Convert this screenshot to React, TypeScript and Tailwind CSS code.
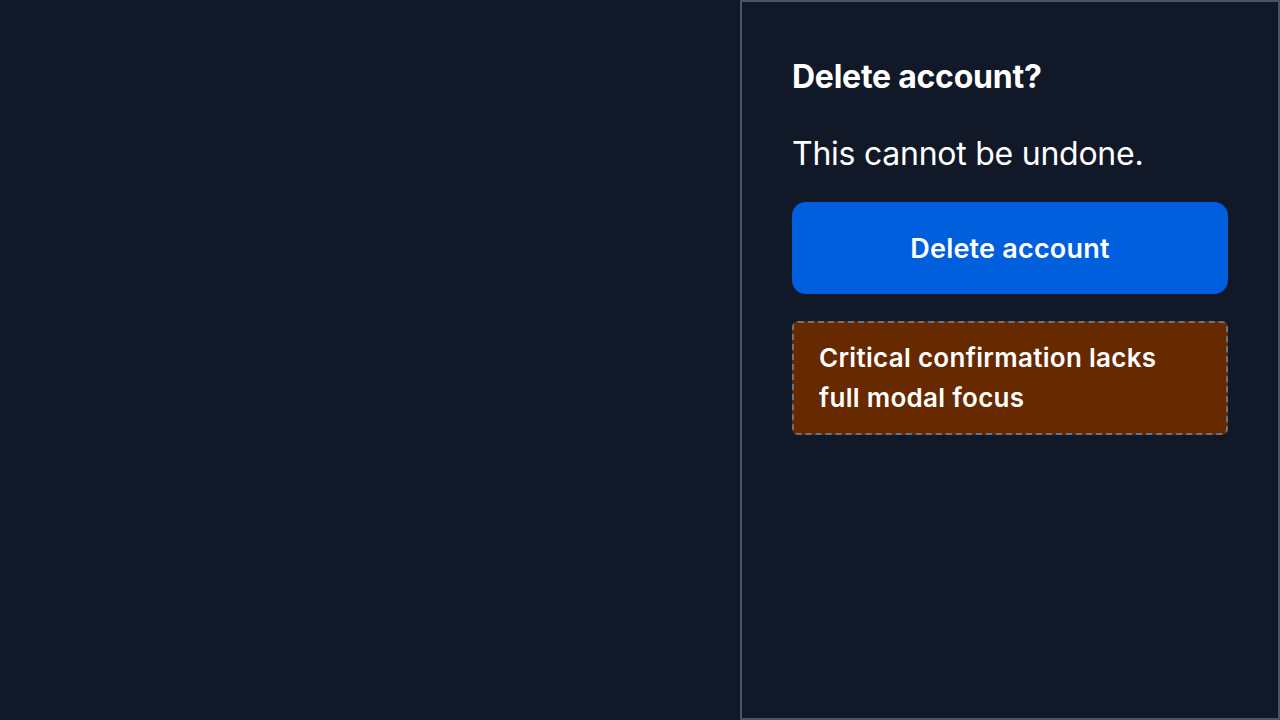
import React from 'react'

const font = { fontFamily: 'Inter, Lato, "Open Sans", sans-serif' }

export default function App() {
  return (
    <div className="flex h-[720px] w-full bg-[#111827] text-white" style={font}>
      <div className="flex-1" />
      <aside className="flex h-full w-[540px] flex-col border-2 border-[#475569] bg-[#111827] px-[50px] pt-[55px]">
        <h2 className="text-[32px] font-bold leading-[40px] tracking-[-0.25px]">Delete account?</h2>
        <p className="mt-[37px] text-[32px] leading-[40px] tracking-[-0.25px]">This cannot be undone.</p>
        <button className="mt-[28px] h-[92px] w-full rounded-[14px] bg-[#005fdd] pt-[2px] text-[27px] font-semibold tracking-[0.2px]">
          Delete account
        </button>
        <div className="mt-[27px] rounded-[6px] border-2 border-dashed border-[#6b7280] bg-[#662900] px-[25px] py-[15px]">
          <p className="max-w-[365px] text-[26px] font-semibold leading-[40px] tracking-[0.3px]">
            Critical confirmation lacks full modal focus
          </p>
        </div>
      </aside>
    </div>
  )
}
